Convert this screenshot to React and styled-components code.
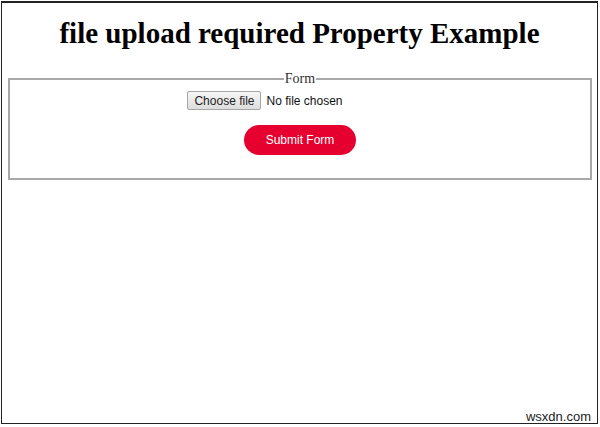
import React from "react";
import styled, { createGlobalStyle } from "styled-components";

const Global = createGlobalStyle`
  html, body {
    margin: 0;
    padding: 0;
    background: #fff;
  }
  body {
    font-family: "Liberation Serif", "Times New Roman", serif;
    color: #000;
  }
`;

const Frame = styled.div`
  position: relative;
  box-sizing: border-box;
  width: 597px;
  height: 423px;
  margin: 1px 0 0 1px;
  border: 1px solid #222;
  border-top-width: 2px;
  padding: 0 5px;
`;

const Title = styled.h1`
  margin: 0;
  padding-top: 12px;
  height: 56px;
  text-align: center;
  font-family: "Liberation Serif", "Times New Roman", serif;
  font-size: 29px;
  font-weight: bold;
  line-height: 36px;
`;

const Fieldset = styled.fieldset`
  box-sizing: border-box;
  margin: 0 0 0 1px;
  width: 584px;
  height: 109px;
  border: 2px solid #a9a9a9;
  padding: 0;
  display: flex;
  flex-direction: column;
  align-items: center;
`;

const Legend = styled.legend`
  margin: 0 auto;
  padding: 0 1px;
  font-family: "Liberation Serif", "Times New Roman", serif;
  font-size: 14px;
  color: #333;
`;

const FileRow = styled.label`
  display: flex;
  align-items: center;
  gap: 5px;
  margin-left: -70px;
  margin-top: 4px;
  font-family: "Liberation Sans", Arial, sans-serif;
  font-size: 12px;
  color: #111;
  input {
    display: none;
  }
`;

const ChooseButton = styled.span`
  box-sizing: border-box;
  display: inline-flex;
  align-items: center;
  justify-content: center;
  width: 74px;
  height: 19px;
  border: 1px solid #a6a6a6;
  border-radius: 2px;
  background: linear-gradient(#f6f6f6, #dddddd);
  color: #222;
`;

const Submit = styled.button`
  margin-top: 15px;
  width: 112px;
  height: 30px;
  border: none;
  border-radius: 15px;
  background: #e6002f;
  color: #fff;
  font-family: "Liberation Sans", Arial, sans-serif;
  font-size: 12px;
  cursor: pointer;
`;

const Watermark = styled.span`
  position: absolute;
  right: 6px;
  bottom: -1px;
  font-family: "Liberation Sans", Arial, sans-serif;
  font-size: 13px;
  color: #222;
`;

export default function App() {
  return (
    <>
      <Global />
      <Frame>
        <Title>file upload required Property Example</Title>
        <form onSubmit={(e) => e.preventDefault()}>
          <Fieldset>
            <Legend>Form</Legend>
            <FileRow>
              <input type="file" required />
              <ChooseButton>Choose file</ChooseButton>
              <span>No file chosen</span>
            </FileRow>
            <Submit type="submit">Submit Form</Submit>
          </Fieldset>
        </form>
        <Watermark>wsxdn.com</Watermark>
      </Frame>
    </>
  );
}
